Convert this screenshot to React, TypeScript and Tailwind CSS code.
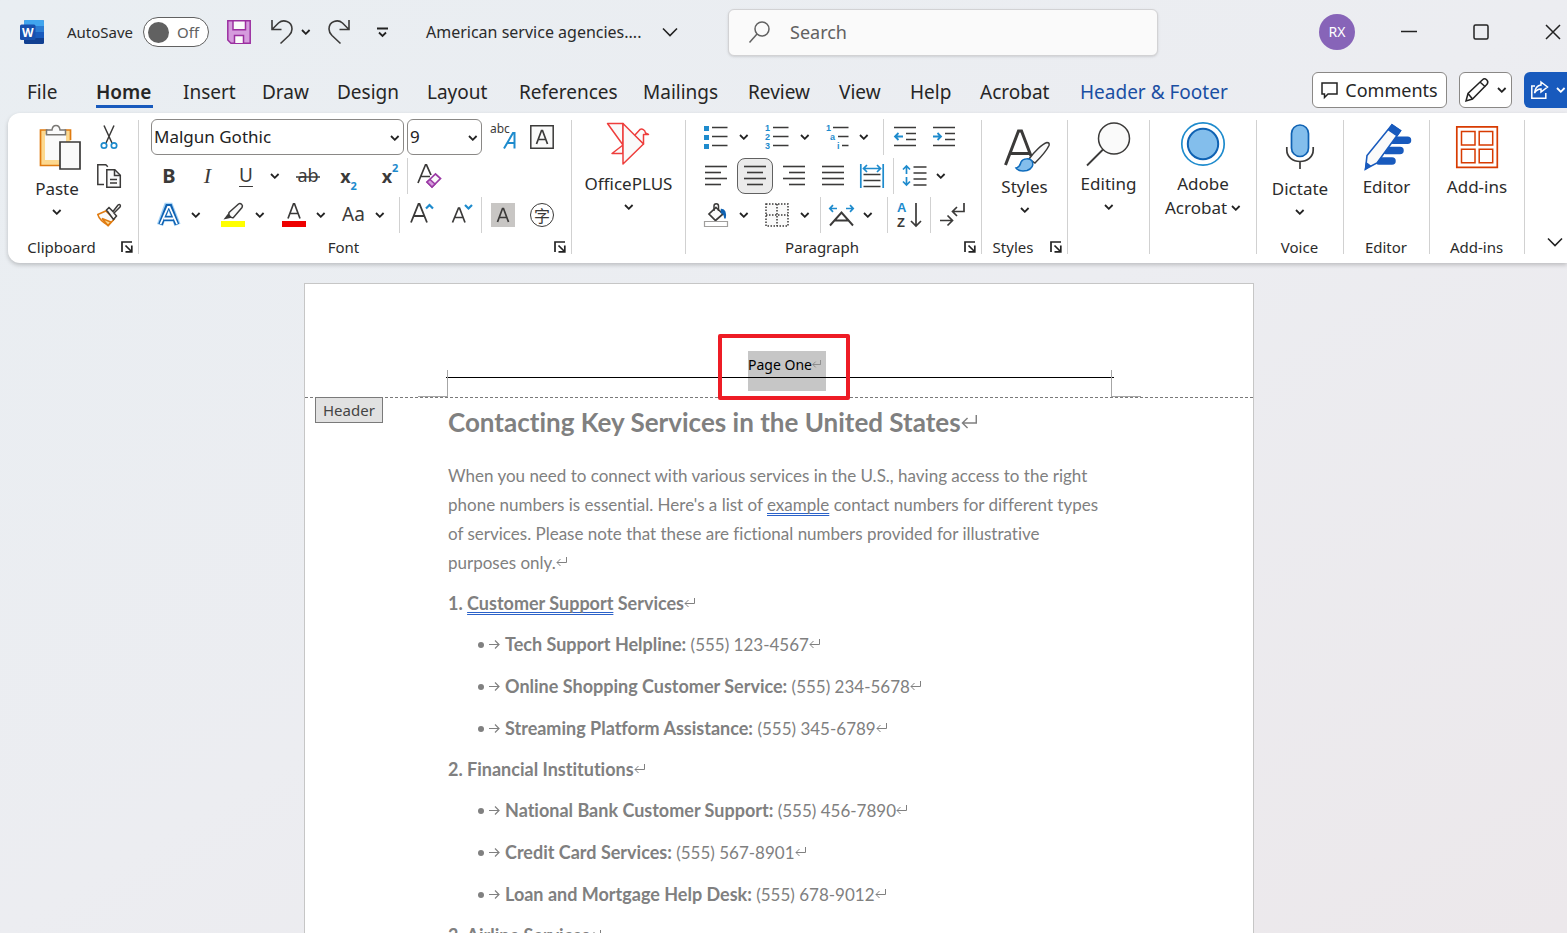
import React from 'react';

const UI = "font-['Noto_Sans',sans-serif]";
const DARK = '#3b3a39';
const BLUE = '#1e8bcd';

type SvgProps = { w?: number; h?: number; children: React.ReactNode };

const Svg = ({ w = 24, h = 24, children }: SvgProps) => (
  <svg
    width={w}
    height={h}
    viewBox={`0 0 ${w} ${h}`}
    fill="none"
    stroke={DARK}
    strokeWidth="1.5"
    className="shrink-0 overflow-visible"
    aria-hidden="true"
  >
    {children}
  </svg>
);

const Chevron = () => (
  <svg width="10" height="6" viewBox="0 0 10 6" fill="none" className="shrink-0" aria-hidden="true">
    <path d="M1 1l3.800 3.800L8.600 1" stroke="#222" strokeWidth="1.800" />
  </svg>
);

const WideChevron = () => (
  <Svg w={16} h={10}>
    <path d="M1 1.500l7 7 7-7" stroke="#222" strokeWidth="1.600" />
  </Svg>
);

// Vertical rule inside a ribbon row
const RowSep = () => <div className="h-9 w-px shrink-0 bg-[#d1d1d1]" />;
// Vertical rule between ribbon groups
const GroupSep = () => <div className="mt-[7px] h-[134px] w-px shrink-0 bg-[#d1d1d1]" />;

type ToolProps = { label: string; w: string; menu?: boolean; children?: React.ReactNode };

const Tool = ({ label, w, menu, children }: ToolProps) => (
  <button
    type="button"
    aria-label={label}
    className={`${w} flex h-9 shrink-0 items-center justify-center gap-2.5 rounded-md text-[#3b3a39] hover:bg-gray-100`}
  >
    {children}
    {menu && <Chevron />}
  </button>
);

const Row = ({ children, pad = '' }: { children: React.ReactNode; pad?: string }) => (
  <div className={`flex h-[39px] items-center ${pad}`}>{children}</div>
);

type GroupProps = { w: string; label?: string; launcher?: boolean; children: React.ReactNode };

const Group = ({ w, label, launcher, children }: GroupProps) => (
  <section className={`${w} flex shrink-0 flex-col pt-1`}>
    <div className="h-[118px]">{children}</div>
    <div className="flex h-6 items-center pr-[5px]">
      <span className={`flex-1 text-center text-[15px] leading-5 text-[#2b2b2b] ${launcher ? 'pr-[6px]' : 'pl-1'}`}>
        {label}
      </span>
      {launcher && (
        <button type="button" aria-label={`${label} settings`}>
          <Svg w={12} h={12}>
            <path d="M1 11V1h10M4.500 4.500L10 10M10.800 4.500v6.300H4.500" stroke="#222" strokeWidth="1.700" />
          </Svg>
        </button>
      )}
    </div>
  </section>
);

type BigProps = { icon: React.ReactNode; top: string; menu?: boolean; children: React.ReactNode };

const BigButton = ({ icon, top, menu, children }: BigProps) => (
  <button type="button" className={`${top} flex w-full flex-col items-center text-[17px] leading-6 text-[#2b2b2b]`}>
    {icon}
    <span className="mt-1 whitespace-nowrap">{children}</span>
    {menu && (
      <span className="flex h-[22px] items-center">
        <Chevron />
      </span>
    )}
  </button>
);

/* ---------- large icons, 48px tall ---------- */

const PasteIcon = () => (
  <Svg w={48} h={48}>
    <path d="M7.500 5h30v35h-30z" fill="#fcd88f" stroke="none" />
    <path d="M12 9.500h21V35H12z" fill="#fafafa" stroke="none" />
    <path d="M27.500 40.500h-20V5h7M31.500 5h6v10" stroke="#e07b10" strokeWidth="1.700" />
    <path d="M13.500 9.800V5H19c.3-3 2-4.500 4-4.500S26.700 2 27 5h5.500v4.800z" fill="#fafafa" stroke="#797774" />
    <path d="M27 17h20v27H27z" fill="#fafafa" strokeWidth="1.700" />
  </Svg>
);

const BirdIcon = () => (
  <Svg w={48} h={48}>
    <g stroke="#ee3e3c" strokeLinejoin="round" fill="#fafafa">
      <path d="M2.500 3.500H18V25z" />
      <path d="M18 25v8.500H7z" />
      <path d="M29.500 15.500l5.500-6c2-1 5 0 5.500 3.500l3 1.500h-5L38.500 24z" />
      <path d="M18 3.500L38.500 24 18 44z" />
    </g>
  </Svg>
);

const StylesIcon = () => (
  <Svg w={48} h={48}>
    <path d="M4.500 42L17.500 8h3l9.500 25M9 30.500h19" strokeWidth="3" />
    <path d="M28 36c5-7 13-15 18-16.500 2 0 2.500 1 2 3C45 29 39 35 34 40z" fill="#fafafa" />
    <path
      d="M15 45c4-1 4-3 5-6 2-4 9-4 11-1 2 4 0 8-5 9.500-5 1-9 0-11-2.500z"
      fill="#83beec"
      stroke="#0f6cbd"
    />
  </Svg>
);

const MagnifierIcon = () => (
  <Svg w={48} h={48}>
    <circle cx="29" cy="18.500" r="15.500" fill="#fafafa" />
    <path d="M18 29.500L2 45.500" strokeWidth="1.800" />
  </Svg>
);

const AcrobatIcon = () => (
  <Svg w={48} h={48}>
    <circle cx="24" cy="24" r="21.200" stroke="#1e8bcd" strokeWidth="1.700" />
    <circle cx="24" cy="24" r="15.200" fill="#83beec" stroke="#0f62b3" strokeWidth="2" />
  </Svg>
);

const MicIcon = () => (
  <Svg w={48} h={48}>
    <rect x="15.500" y="0" width="17" height="31.500" rx="8.500" fill="#83beec" stroke="#0f62b3" strokeWidth="1.700" />
    <path d="M10.800 22v3c0 7 6 11.500 13.200 11.500S37.200 32 37.200 25v-3M24 36.500V44" strokeWidth="1.700" />
  </Svg>
);

const EditorIcon = () => (
  <Svg w={48} h={48}>
    <path d="M30 17.200h14.500M23 27.500h14M16 38h13" stroke="#185abd" strokeWidth="7.500" strokeLinecap="round" />
    <path d="M29 1.800l8.500 6L14 40 2.500 46 4 32.500z" fill="#fafafa" stroke="#185abd" strokeWidth="1.600" />
    <path d="M29 1.800l8.500 6-3.500 5-8.500-6zM2.500 46l1-6 3.500 2.700z" fill="#185abd" stroke="#185abd" />
  </Svg>
);

const AddinsIcon = () => (
  <Svg w={48} h={48}>
    <g stroke="#d83b01" strokeWidth="1.500">
      <path d="M3.800 3.800h40.500v40.500H3.800z" strokeWidth="1.700" />
      <path d="M8.500 8.500h13.500v13.500h-13.500zM26.200 8.500h13.500v13.500h-13.500zM8.500 26.200h13.500v13.500h-13.500zM26.200 26.200h13.500v13.500h-13.500z" />
    </g>
  </Svg>
);

/* ---------- small icons ---------- */

const CutIcon = () => (
  <Svg>
    <path d="M7 .5l8 17.500M17 .5L9 18" />
    <circle cx="7" cy="20.500" r="2.700" stroke={BLUE} strokeWidth="1.700" />
    <circle cx="17" cy="20.500" r="2.700" stroke={BLUE} strokeWidth="1.700" />
  </Svg>
);

const CopyIcon = () => (
  <Svg>
    <path d="M7 20.500H.8V.8h8l2 2" />
    <path d="M9.800 5.800h8l5.500 5.500v12H9.800z" fill="#fafafa" />
    <path d="M17.500 5.800v5.700h5.800M13 15.500h7M13 19h7" />
  </Svg>
);

const PainterIcon = () => (
  <Svg>
    <path d="M.8 11.500l8-3.500 8.500 8-6 6.500C7 20 2 16 .8 11.500z" fill="#fafafa" stroke="#e07b10" />
    <path d="M5 15.500l9 3.500-3 3.500z" fill="#fcd88f" stroke="#e07b10" />
    <path d="M9.500 7L12 4.500l4 4L21 2c2-1.500 3 .5 2 2l-6 6 2.500 3-3 3.500z" fill="#fafafa" />
  </Svg>
);

const Lines = ({ rows }: { rows: number[][] }) => (
  <Svg>
    {rows.map(([y, x1, x2]) => (
      <path key={y} d={`M${x1} ${y}H${x2}`} strokeWidth="1.600" />
    ))}
  </Svg>
);

const BulletsIcon = () => (
  <Svg>
    <path d="M-1 1h5v5h-5zM-1 10h5v5h-5zM-1 19h5v5h-5z" fill={BLUE} stroke="none" />
    <path d="M7 2.500h15.500M7 11.500h15.500M7 20.500h15.500" />
  </Svg>
);

const NumberingIcon = () => (
  <Svg>
    <g fill={BLUE} stroke="none" fontFamily="Liberation Sans" fontSize="9" fontWeight="700">
      <text x="-1" y="6">1</text>
      <text x="-1" y="15">2</text>
      <text x="-1" y="24">3</text>
    </g>
    <path d="M7 2.500h15.500M7 11.500h15.500M7 20.500h15.500" />
  </Svg>
);

const MultilevelIcon = () => (
  <Svg>
    <g fill={BLUE} stroke="none" fontFamily="Liberation Sans" fontSize="9" fontWeight="700">
      <text x="1" y="6">1</text>
      <text x="5" y="15">a</text>
      <text x="12" y="24">i</text>
    </g>
    <path d="M8 2.500h15.500M13 11.500h10.500M17 20.500h6.500" />
  </Svg>
);

const IndentIcon = ({ out }: { out?: boolean }) => (
  <Svg>
    <path d="M1 2.500h22M13 8.500h10M13 14.500h10M1 20.500h22" />
    <path
      d={out ? 'M10 11.500H2M5.500 8L2 11.500 5.500 15' : 'M1 11.500h8M5.500 8L9 11.500 5.500 15'}
      stroke={BLUE}
      strokeWidth="1.800"
    />
  </Svg>
);

const DistributeIcon = () => (
  <Svg>
    <path d="M.8 0v24M23.200 0v24M3.500 4.500h17M7 1L3.500 4.500 7 8M17 1l3.500 3.500L17 8" stroke={BLUE} strokeWidth="1.700" />
    <path d="M3.500 10.500h17M3.500 16.500h17M3.500 22.500h17" />
  </Svg>
);

const LineSpacingIcon = () => (
  <Svg>
    <path d="M4.500 10V2M1 5.500L4.500 2 8 5.500M4.500 13v8M1 17.500L4.500 21 8 17.500" stroke={BLUE} strokeWidth="1.700" />
    <path d="M11.500 3h13M11.500 9h13M11.500 15h13M11.500 21h13" />
  </Svg>
);

const BucketIcon = () => (
  <Svg>
    <path d="M11 4.500l7 6.500-7.500 6.500L4 11z" fill="#fafafa" strokeWidth="1.700" />
    <path d="M9 8V3c0-3 4.500-3 4.500 0v5" />
    <path d="M16.500 6.500c3 0 4.500 3 3.500 9-.5-4-1-5.500-3.500-6z" fill="#0f62b3" stroke="#0f62b3" />
    <path d="M-.5 18.500h23v5h-23z" fill="#fff" stroke="#a19f9d" strokeWidth="1.200" />
  </Svg>
);

const BordersIcon = () => (
  <Svg>
    <path d="M0 1h22v22H0zM11 1v22M0 12h22" fill="#fafafa" strokeDasharray="1.500 1.500" />
  </Svg>
);

const TextScaleIcon = () => (
  <Svg>
    <path d="M1 22.500L12.500 9.500 24 22.500M5.500 17.500h14" strokeWidth="1.900" />
    <path d="M8 5.500H1M4 2.200L.8 5.500 4 8.800M17 5.500h7M21 2.200l3.200 3.300L21 8.800" stroke={BLUE} strokeWidth="1.700" />
  </Svg>
);

const SortIcon = () => (
  <Svg>
    <g stroke="none" fontFamily="Liberation Sans" fontSize="13" fontWeight="700">
      <text x="0" y="9" fill={BLUE}>A</text>
      <text x="0" y="24" fill={DARK}>Z</text>
    </g>
    <path d="M19 0v23M14 18l5 5 5-5" strokeWidth="1.700" />
  </Svg>
);

const MarksIcon = () => (
  <Svg>
    <path d="M0 17.500h12M7.500 12.500l5 5-5 5M24 0v8.500H12.500M17 4l-4.500 4.500L17 13" strokeWidth="1.700" />
  </Svg>
);

const HighlightIcon = () => (
  <Svg>
    <path d="M2.500 16.500l5-6.500 4 4.500z" fill={DARK} stroke="none" />
    <path d="M8 9.500L17.500 1c2-1.500 5 1 3.500 3.500l-8.500 10c-2 1-5.500-2-4.500-5z" fill="#fafafa" />
    <path d="M0 18h24v6H0z" fill="#ff0" stroke="none" />
  </Svg>
);

const FontColorIcon = () => (
  <Svg>
    <path d="M6 15.500L11.500.8h1L18 15.500M8 10.500h8" strokeWidth="1.700" />
    <path d="M0 18h24v6H0z" fill="#e00" stroke="none" />
  </Svg>
);

const GlowIcon = () => (
  <Svg>
    <path d="M3 22L10 3h3l7.500 19M6.500 15.500h10" stroke="#a5d2f5" strokeWidth="6.500" />
    <path d="M3.500 21.500L10.500 3.500h2.500l7 18M6.500 15.500h10" stroke="#0f62b3" strokeWidth="4.800" />
    <path d="M3.500 21L11 4h1.500l7.500 17M7 15.500h9.500" stroke="#fff" strokeWidth="1.800" />
  </Svg>
);

const StrikeIcon = () => (
  <Svg>
    <text x="12" y="18" fontSize="18" fill={DARK} stroke="none" textAnchor="middle">ab</text>
    <path d="M0 13h24" />
  </Svg>
);

const ClearFormatIcon = () => (
  <Svg>
    <path d="M1 19L8.500.8h1L14 11M4 12.500h9" strokeWidth="1.700" />
    <path d="M10 18l8.500-8 5 4.500-8.500 8.500z" fill="#fafafa" stroke="#9b3aa5" strokeWidth="1.700" />
    <path d="M10 18l3-2.500 5 4.500-3 3z" fill="#d59bdd" stroke="#9b3aa5" />
  </Svg>
);

const GrowIcon = ({ shrink }: { shrink?: boolean }) => (
  <Svg>
    {shrink ? (
      <path d="M1.500 19.500L7.500 5h1L14 19.500M4 14.500h8" strokeWidth="1.700" />
    ) : (
      <path d="M1 19.500L8.500.8h1L17 19.500M4 13h11" strokeWidth="1.800" />
    )}
    <path d={shrink ? 'M14 2l3.500 3.500L21 2' : 'M16 5.500L19.500 2 23 5.500'} stroke={BLUE} strokeWidth="2.200" />
  </Svg>
);

const PhoneticIcon = () => (
  <Svg w={26} h={26}>
    <text x="0" y="9" fontSize="12" fill={DARK} stroke="none">abc</text>
    <path d="M14 24.500L23 9h1.500v15.500M17 19h7.500" stroke={BLUE} strokeWidth="2" />
  </Svg>
);

const WordLogo = () => (
  <Svg>
    <g stroke="none">
      <rect x="4" y="0" width="20" height="24" rx="1.500" fill="#103f91" />
      <path d="M4 1.500C4 .7 4.700 0 5.500 0h17c.8 0 1.500.7 1.500 1.500V6H4z" fill="#41a5ee" />
      <path d="M4 6h20v6H4z" fill="#2b7cd3" />
      <path d="M4 12h20v6H4z" fill="#185abd" />
      <rect x="0" y="4.500" width="15.500" height="15.500" rx="1.500" fill="#1750ae" />
    </g>
    <text x="7.700" y="16.500" fontSize="12" fontWeight="700" fill="#fff" stroke="none" textAnchor="middle">W</text>
  </Svg>
);

const SaveIcon = () => (
  <Svg>
    <path d="M.8.8h22.400v22.400H4L.8 20z" fill="#d59bdd" stroke="#9b2fa0" />
    <path d="M6 .8h12.500v9H6zM7.500 23V15.500h9V23" fill="#fafafa" stroke="#9b2fa0" />
  </Svg>
);

/* ---------- page parts ---------- */

const TitleBar = () => (
  <header className="flex h-16 shrink-0 items-center pl-5 text-[15px] text-[#2b2b2b]">
    <WordLogo />
    <label className="ml-[23px] flex items-center">
      <span className="w-[76px]">AutoSave</span>
      <input type="checkbox" className="sr-only" />
      <span className="flex h-[30px] w-[66px] items-center gap-2 rounded-full border border-[#616161] bg-white pl-1 text-[#616161]">
        <span className="size-[21px] rounded-full bg-[#616161]" />
        Off
      </span>
    </label>
    <button type="button" aria-label="Save" className="ml-[18px]">
      <SaveIcon />
    </button>
    <button type="button" aria-label="Undo" className="ml-[19px] flex items-center gap-[7px]">
      <Svg>
        <path d="M2 0v9.500h9.500M2 9.500l6.500-6.500C13-1 22 1 22 9c0 3-1.500 5-3 6.500l-8.500 8" strokeWidth="1.600" />
      </Svg>
      <Chevron />
    </button>
    <button type="button" aria-label="Redo" className="ml-4">
      <Svg>
        <path d="M22 0v9.500h-9.500M22 9.500L15.500 3C11-1 2 1 2 9c0 3 1.500 5 3 6.500l8.500 8" strokeWidth="1.600" />
      </Svg>
    </button>
    <button type="button" aria-label="Customize toolbar" className="ml-[26px]">
      <Svg w={11} h={10}>
        <path d="M0 1.500h11M2 5.500l3.500 3.500L9 5.500" stroke="#222" strokeWidth="1.800" />
      </Svg>
    </button>
    <button type="button" className="ml-[38px] flex items-center whitespace-nowrap text-base">
      <span className="w-[236px] text-left">American service agencies....</span>
      <WideChevron />
    </button>
    <label className="ml-[50px] flex h-[47px] w-[430px] items-center gap-5 rounded-md border border-[#d2d2d4] bg-[#fafafa] pl-5 shadow-sm">
      <Svg w={21} h={22}>
        <circle cx="13" cy="8" r="7" stroke="#616161" />
        <path d="M8 13L.5 21.500" stroke="#616161" />
      </Svg>
      <input
        type="search"
        aria-label="Search"
        placeholder="Search"
        className="w-full bg-transparent text-[18px] text-[#616161] outline-none placeholder:text-[#616161]"
      />
    </label>
    <div className="ml-auto flex items-center pr-[6px]">
      <button type="button" className="size-9 rounded-full bg-[#8764b8] text-sm text-white">
        RX
      </button>
      <button type="button" aria-label="Minimize" className="ml-[46px]">
        <Svg w={16} h={16}>
          <path d="M0 7.500h16" stroke="#222" />
        </Svg>
      </button>
      <button type="button" aria-label="Maximize" className="ml-14">
        <Svg w={16} h={16}>
          <rect x="1" y="1" width="14" height="14" rx="1.500" stroke="#222" />
        </Svg>
      </button>
      <button type="button" aria-label="Close" className="ml-14">
        <Svg w={16} h={16}>
          <path d="M1 1l14 14M15 1L1 15" stroke="#222" />
        </Svg>
      </button>
    </div>
  </header>
);

const TABS = [
  { name: 'File', w: 'w-[69px]' },
  { name: 'Home', w: 'w-[87px]' },
  { name: 'Insert', w: 'w-[79px]' },
  { name: 'Draw', w: 'w-[75px]' },
  { name: 'Design', w: 'w-[90px]' },
  { name: 'Layout', w: 'w-[92px]' },
  { name: 'References', w: 'w-[124px]' },
  { name: 'Mailings', w: 'w-[105px]' },
  { name: 'Review', w: 'w-[91px]' },
  { name: 'View', w: 'w-[71px]' },
  { name: 'Help', w: 'w-[70px]' },
  { name: 'Acrobat', w: 'w-[100px]' },
  { name: 'Header & Footer', w: 'w-[150px]' },
];

const TabBar = () => (
  <div className="flex h-[49px] shrink-0 items-start pl-[27px] text-[#262626]">
    <nav className="flex pt-3 text-[19px] leading-8">
      {TABS.map(({ name, w }) => (
        <div key={name} className={`${w} flex shrink-0`}>
          <button
            type="button"
            className={`flex h-8 flex-col whitespace-nowrap ${
              name === 'Home' ? 'border-b-3 border-[#185abd] pr-[2px] font-semibold' : ''
            } ${name === 'Header & Footer' ? 'text-[#1a4fa3]' : ''}`}
          >
            {name}
          </button>
        </div>
      ))}
    </nav>
    <div className="ml-auto flex shrink-0 gap-3 pt-2 text-[19px]">
      <button
        type="button"
        className="flex h-9 w-[135px] items-center justify-center gap-[7px] rounded-md border border-[#8a8886] bg-white text-[18px]"
      >
        <Svg w={17} h={17}>
          <path d="M1 1h15v11H7l-3.500 3.500V12H1z" stroke="#222" />
        </Svg>
        Comments
      </button>
      <button
        type="button"
        aria-label="Editing mode"
        className="flex h-9 w-[53px] items-center justify-center gap-2 rounded-md border border-[#8a8886] bg-white"
      >
        <Svg>
          <path
            d="M1 23l2-7.500L17.500 1.800c2.500-2.500 7 1 4.500 4.500L7.500 21zM15 4l5.500 5M3 15.500L7.500 21"
            stroke="#222"
          />
        </Svg>
        <Chevron />
      </button>
      <button
        type="button"
        aria-label="Share"
        className="flex h-9 w-[43px] items-center gap-2 rounded-l-md bg-[#185abd] pl-[7px]"
      >
        <Svg w={17} h={18}>
          <path d="M4 5H.8v12.200h14V12" stroke="#fff" />
          <path d="M10 1l6.500 5-6.500 5V8C7 8 5 9.500 3.500 12 4 8 6 4.500 10 4z" stroke="#fff" />
        </Svg>
        <svg width="10" height="6" viewBox="0 0 10 6" fill="none" className="shrink-0" aria-hidden="true">
          <path d="M1 1l3.800 3.800L8.600 1" stroke="#fff" strokeWidth="1.800" />
        </svg>
      </button>
    </div>
  </div>
);

const ComboBox = ({ label, value, w }: { label: string; value: string; w: string }) => (
  <div className={`${w} relative shrink-0`}>
    <select
      aria-label={label}
      className="h-9 w-full appearance-none rounded-md border border-[#8a8886] bg-white pl-[2px] text-[17px] text-[#222]"
    >
      <option>{value}</option>
    </select>
    <span className="pointer-events-none absolute top-4 right-1">
      <Chevron />
    </span>
  </div>
);

const Ribbon = () => (
  <div className="ml-2 flex h-[150px] shrink-0 rounded-l-xl bg-white shadow-[0_2px_4px_rgba(0,0,0,0.2)]">
    <Group w="w-[130px]" label="Clipboard" launcher>
      <div className="flex">
        <div className="w-[82px] pl-4">
          <BigButton top="pt-2" icon={<PasteIcon />} menu>
            Paste
          </BigButton>
        </div>
        <div className="flex flex-col">
          <Row><Tool label="Cut" w="w-[38px]"><CutIcon /></Tool></Row>
          <Row><Tool label="Copy" w="w-[38px]"><CopyIcon /></Tool></Row>
          <Row><Tool label="Format Painter" w="w-[38px]"><PainterIcon /></Tool></Row>
        </div>
      </div>
    </Group>
    <GroupSep />
    <Group w="w-[432px]" label="Font" launcher>
      <Row pad="pl-3">
        <ComboBox label="Font" value="Malgun Gothic" w="w-[253px] mr-[3px]" />
        <ComboBox label="Font size" value="9" w="w-[75px]" />
        <Tool label="Phonetic Guide" w="w-[42px]"><PhoneticIcon /></Tool>
        <Tool label="Character Border" w="w-9">
          <Svg>
            <path d="M.8.8h22.400v22.400H.8z" fill="#fafafa" />
            <path d="M6.500 19l5-13.500h1L17.500 19M8.500 14.500h7" strokeWidth="1.700" />
          </Svg>
        </Tool>
      </Row>
      <Row pad="pl-[11px]">
        <Tool label="Bold" w="w-[38px]"><span className="text-[20px] font-bold">B</span></Tool>
        <Tool label="Italic" w="w-[39px]">
          <span className="font-['Liberation_Serif',serif] text-[22px] italic">I</span>
        </Tool>
        <Tool label="Underline" w="w-[65px]" menu>
          <span className="mr-[7px] text-[19px] underline underline-offset-4">U</span>
        </Tool>
        <Tool label="Strikethrough" w="w-8"><StrikeIcon /></Tool>
        <Tool label="Subscript" w="w-[49px]">
          <span className="flex h-7 text-[18px] leading-7 font-bold">
            x<sub className="self-end text-[11px] leading-3 text-[#1e8bcd]">2</sub>
          </span>
        </Tool>
        <Tool label="Superscript" w="w-[34px]">
          <span className="flex h-7 text-[18px] leading-7 font-bold">
            x<sup className="top-0 text-[11px] leading-3 text-[#1e8bcd]">2</sup>
          </span>
        </Tool>
        <RowSep />
        <Tool label="Clear Formatting" w="w-[42px]"><ClearFormatIcon /></Tool>
      </Row>
      <Row pad="pl-[11px]">
        <Tool label="Text Effects" w="w-[57px]" menu><GlowIcon /></Tool>
        <Tool label="Highlight" w="w-[72px]" menu><HighlightIcon /></Tool>
        <Tool label="Font Color" w="w-[49px]" menu><FontColorIcon /></Tool>
        <Tool label="Change Case" w="w-[71px]" menu><span className="text-[19px]">Aa</span></Tool>
        <RowSep />
        <Tool label="Grow Font" w="w-11"><GrowIcon /></Tool>
        <Tool label="Shrink Font" w="w-[37px]"><GrowIcon shrink /></Tool>
        <RowSep />
        <Tool label="Character Shading" w="w-[42px]">
          <Svg>
            <path d="M0 0h24v24H0z" fill="#c8c6c4" stroke="none" />
            <path d="M6.500 19l5-13.500h1L17.500 19M8.500 14.500h7" strokeWidth="1.700" />
          </Svg>
        </Tool>
        <Tool label="Enclose Characters" w="w-9">
          <span className="flex size-6 items-center justify-center rounded-full border border-[#3b3a39] font-['Noto_Sans_CJK_SC',sans-serif] text-base leading-none">
            字
          </span>
        </Tool>
      </Row>
    </Group>
    <GroupSep />
    <Group w="w-[113px]">
      <BigButton top="pt-[3px]" icon={<BirdIcon />} menu>OfficePLUS</BigButton>
    </Group>
    <GroupSep />
    <Group w="w-[295px]" label="Paragraph" launcher>
      <Row pad="pl-[10px]">
        <Tool label="Bullets" w="w-[61px]" menu><BulletsIcon /></Tool>
        <Tool label="Numbering" w="w-[61px]" menu><NumberingIcon /></Tool>
        <Tool label="Multilevel List" w="w-[58px] mr-[7px]" menu><MultilevelIcon /></Tool>
        <RowSep />
        <Tool label="Decrease Indent" w="w-[42px]"><IndentIcon out /></Tool>
        <Tool label="Increase Indent" w="w-9"><IndentIcon /></Tool>
      </Row>
      <Row pad="pl-[10px]">
        <Tool label="Align Left" w="w-[39px]">
          <Lines rows={[[2.5, 1, 23], [8.5, 1, 17], [14.5, 1, 23], [20.5, 1, 17]]} />
        </Tool>
        <button
          type="button"
          aria-label="Center"
          aria-pressed="true"
          className="mr-px ml-[2px] flex size-9 shrink-0 items-center justify-center rounded-lg border border-[#616161] bg-[#ebebeb]"
        >
          <Lines rows={[[2.5, 1, 23], [8.5, 4, 20], [14.5, 1, 23], [20.5, 4, 20]]} />
        </button>
        <Tool label="Align Right" w="w-[39px]">
          <Lines rows={[[2.5, 1, 23], [8.5, 7, 23], [14.5, 1, 23], [20.5, 7, 23]]} />
        </Tool>
        <Tool label="Justify" w="w-[39px]">
          <Lines rows={[[2.5, 1, 23], [8.5, 1, 23], [14.5, 1, 23], [20.5, 1, 23]]} />
        </Tool>
        <Tool label="Distributed" w="w-[39px] mr-[2px]"><DistributeIcon /></Tool>
        <RowSep />
        <Tool label="Line Spacing" w="w-[60px]" menu><LineSpacingIcon /></Tool>
      </Row>
      <Row pad="pl-[10px]">
        <Tool label="Shading" w="w-[61px]" menu><BucketIcon /></Tool>
        <Tool label="Borders" w="w-[61px] mr-[2px]" menu><BordersIcon /></Tool>
        <RowSep />
        <Tool label="Asian Layout" w="w-[60px] mr-[6px]" menu><TextScaleIcon /></Tool>
        <RowSep />
        <Tool label="Sort" w="w-[42px]"><SortIcon /></Tool>
        <RowSep />
        <Tool label="Show Marks" w="w-[42px]"><MarksIcon /></Tool>
      </Row>
    </Group>
    <GroupSep />
    <Group w="w-[85px]" label="Styles" launcher>
      <BigButton top="pt-[6px]" icon={<StylesIcon />} menu>Styles</BigButton>
    </Group>
    <GroupSep />
    <Group w="w-[81px]">
      <BigButton top="pt-[3px]" icon={<MagnifierIcon />} menu>Editing</BigButton>
    </Group>
    <GroupSep />
    <Group w="w-[106px]">
      <BigButton top="pt-[3px]" icon={<AcrobatIcon />}>
        Adobe
        <span className="flex items-center gap-1">
          Acrobat <Chevron />
        </span>
      </BigButton>
    </Group>
    <GroupSep />
    <Group w="w-[86px]" label="Voice">
      <BigButton top="pt-2" icon={<MicIcon />} menu>Dictate</BigButton>
    </Group>
    <GroupSep />
    <Group w="w-[85px]" label="Editor">
      <BigButton top="pt-[6px]" icon={<EditorIcon />}>Editor</BigButton>
    </Group>
    <GroupSep />
    <Group w="w-[94px]" label="Add-ins">
      <BigButton top="pt-[6px]" icon={<AddinsIcon />}>Add-ins</BigButton>
    </Group>
    <GroupSep />
    <button type="button" aria-label="Collapse ribbon" className="ml-auto self-end pr-1 pb-4">
      <WideChevron />
    </button>
  </div>
);

// Paragraph mark shown at the end of every line
const Mark = ({ size = 11 }: { size?: number }) => (
  <svg
    width={size}
    height={size}
    viewBox="0 0 11 11"
    fill="none"
    stroke="#808080"
    className="inline-block align-[1px]"
    aria-hidden="true"
  >
    <path d="M10.500 0v5.500H1M4.500 2L1 5.500 4.500 9" />
  </svg>
);

const Flagged = ({ children }: { children: React.ReactNode }) => (
  <span className="underline decoration-[#2b62c9] decoration-double decoration-1 underline-offset-2 [text-decoration-skip-ink:none]">
    {children}
  </span>
);

const SECTIONS = [
  {
    title: <>1. <Flagged>Customer Support</Flagged> Services</>,
    items: [
      ['Tech Support Helpline:', '(555) 123-4567'],
      ['Online Shopping Customer Service:', '(555) 234-5678'],
      ['Streaming Platform Assistance:', '(555) 345-6789'],
    ],
  },
  {
    title: <>2. Financial Institutions</>,
    items: [
      ['National Bank Customer Support:', '(555) 456-7890'],
      ['Credit Card Services:', '(555) 567-8901'],
      ['Loan and Mortgage Help Desk:', '(555) 678-9012'],
    ],
  },
  { title: <>3. Airline Services</>, items: [] },
];

const DocumentPage = () => (
  <article className="relative mx-auto w-[950px] border border-[#c6c6c6] bg-white pb-40 font-['Lato',sans-serif] text-[#808080] [font-variant-ligatures:none]">
    <div className="relative h-[114px] border-b border-dashed border-[#7a7a7a] pt-[67px] pr-[139px] pl-[141px] font-['Noto_Sans',sans-serif]">
      <div className="flex h-[27px] justify-center border-b border-black pl-[14px]">
        <p className="h-10 w-[78px] bg-[#c6c6c6] text-[14px] leading-7 whitespace-nowrap text-black">
          Page One
          <Mark size={9} />
        </p>
      </div>
      {/* the rule runs on top of the selected text's shading */}
      <div className="absolute top-[93px] left-[141px] right-[139px] h-px bg-black" />
      <div className="absolute bottom-0 left-[113px] h-[27px] w-[30px] border-r border-b border-[#a6a6a6]" />
      <div className="absolute right-[112px] bottom-0 h-[27px] w-[30px] border-b border-l border-[#a6a6a6]" />
      <div className="absolute top-[50px] left-[413px] h-[66px] w-[132px] rounded-xs border-4 border-[#ee1c25]" />
      <span className="absolute top-[113px] left-[10px] border border-[#7a7a7a] bg-[#e1e1e1] px-[7px] text-[15px] leading-6 text-[#444]">
        Header
      </span>
    </div>
    <div className="px-[143px] text-[17px] leading-[29px]">
      <h1 className="pt-[6px] text-[26px] leading-9 font-bold whitespace-nowrap">
        Contacting Key Services in the United States
        <Mark size={16} />
      </h1>
      <p className="mt-[21px] mb-3 whitespace-nowrap">
        When you need to connect with various services in the U.S., having access to the right
        <br />
        phone numbers is essential. Here's a list of <Flagged>example</Flagged> contact numbers for different types
        <br />
        of services. Please note that these are fictional numbers provided for illustrative
        <br />
        purposes only.
        <Mark />
      </p>
      {SECTIONS.map(({ title, items }, i) => (
        <section key={i} className="mb-3">
          <h2 className="mb-3 text-[18px] font-bold">
            {title}
            <Mark />
          </h2>
          <ul className="flex flex-col gap-[13px] pl-7">
            {items.map(([name, phone]) => (
              <li key={name} className="flex h-[29px] items-center">
                <span className="mr-[5px] ml-[2px] size-[6px] rounded-full bg-[#808080]" />
                <Svg w={11} h={9}>
                  <path d="M0 4.500h10M6 .5l4 4-4 4" stroke="#808080" strokeWidth="1.200" />
                </Svg>
                <p className="ml-[5px]">
                  <strong className="text-[18px]">{name}</strong> {phone}
                  <Mark />
                </p>
              </li>
            ))}
          </ul>
        </section>
      ))}
    </div>
  </article>
);

export default function App() {
  return (
    <div
      className={`${UI} flex h-screen flex-col overflow-hidden bg-linear-to-br from-[#e9eef2] via-[#ecedf1] to-[#ece8eb]`}
    >
      <TitleBar />
      <TabBar />
      <Ribbon />
      <main className="min-h-0 flex-1 overflow-hidden pt-5 pr-[9px]">
        <DocumentPage />
      </main>
    </div>
  );
}
